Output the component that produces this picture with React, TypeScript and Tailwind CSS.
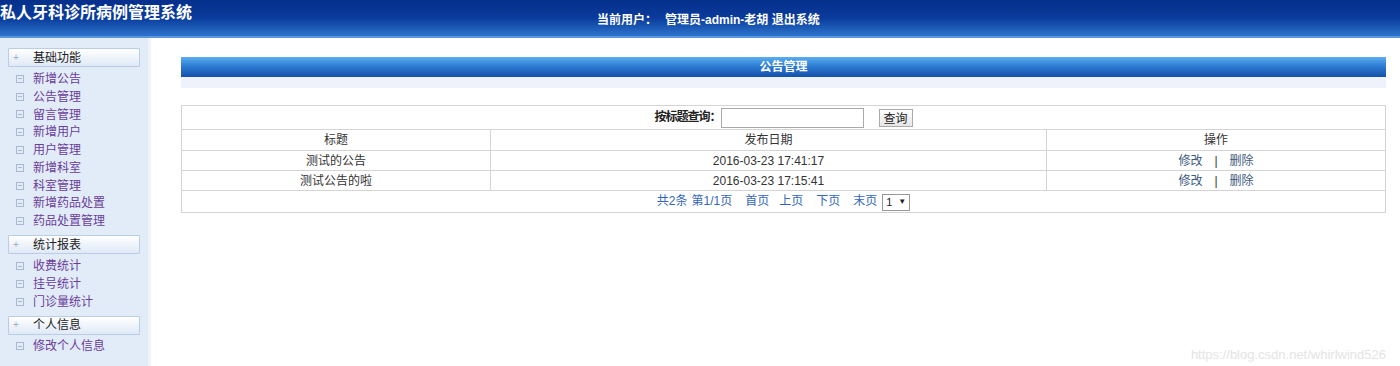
const FONT = { fontFamily: '"Liberation Sans", Arial, "Noto Sans CJK SC", sans-serif' };

type Section = { title: string; items: string[] };

const MENU: Section[] = [
  {
    title: "基础功能",
    items: ["新增公告", "公告管理", "留言管理", "新增用户", "用户管理", "新增科室", "科室管理", "新增药品处置", "药品处置管理"],
  },
  { title: "统计报表", items: ["收费统计", "挂号统计", "门诊量统计"] },
  { title: "个人信息", items: ["修改个人信息"] },
];

const ROWS = [
  { title: "测试的公告", date: "2016-03-23 17:41:17" },
  { title: "测试公告的啦", date: "2016-03-23 17:15:41" },
];

function MenuHeader({ title }: { title: string }) {
  return (
    <div className="mx-[8px] flex h-[19px] items-center rounded-[1px] border border-[#b9cde6] bg-gradient-to-b from-white to-[#dfe9f6] text-[12px] text-[#222]">
      <span className="ml-[4px] w-[20px] text-[10px] leading-none text-[#9bb0cc]">+</span>
      <span>{title}</span>
    </div>
  );
}

function MenuItem({ label }: { label: string }) {
  return (
    <div className="flex h-[17.8px] items-center pl-[16px] text-[12px] text-[#6a3d9a]">
      <span className="mr-[9px] flex h-[8px] w-[8px] items-center justify-center border border-[#a9b9d0]">
        <span className="h-px w-[4px] bg-[#a9b9d0]" />
      </span>
      <span>{label}</span>
    </div>
  );
}

export default function App() {
  return (
    <div className="flex h-[366px] w-[1400px] flex-col overflow-hidden bg-white" style={FONT}>
      {/* top banner */}
      <div className="relative flex h-[38px] shrink-0 border-b-[2px] border-[#5b95dc] bg-gradient-to-b from-[#05308c] via-[#0a3b9c] to-[#2e74cc]">
        <div className="pt-[3px] text-[16px] font-bold leading-[20px] text-white">私人牙科诊所病例管理系统</div>
        <div className="absolute left-[597px] top-[11px] text-[12px] font-bold text-white">
          当前用户：<span className="ml-[8px]">管理员-admin-老胡 退出系统</span>
        </div>
      </div>

      <div className="flex flex-1">
        {/* sidebar */}
        <div className="w-[151px] shrink-0 border-r-[3px] border-[#f0f5fc] bg-[#e2ecf8] pt-[10px]">
          {MENU.map((s, i) => (
            <div key={s.title} className={i > 0 ? "mt-[5px]" : ""}>
              <MenuHeader title={s.title} />
              <div className="pt-[3px]">
                {s.items.map((it) => (
                  <MenuItem key={it} label={it} />
                ))}
              </div>
            </div>
          ))}
        </div>

        {/* main */}
        <div className="flex-1 pl-[30px] pr-[14px] pt-[19px] text-[12px] text-[#333]">
          <div className="flex h-[20px] items-center justify-center bg-gradient-to-b from-[#5aaef0] via-[#2a78d0] to-[#1650aa] text-[12px] font-bold text-white">
            公告管理
          </div>
          <div className="h-[11px] bg-[#eef3fb]" />

          <table className="mt-[17px] w-full border-collapse border border-[#d4d4d4]">
            <tbody>
              <tr className="h-[24px]">
                <td colSpan={3} className="border border-[#d4d4d4] text-center">
                  <span className="font-bold tracking-[-1px] text-[#222]">按标题查询：</span>
                  <input className="h-[20px] w-[143px] border border-[#aaa] align-middle" />
                  <button className="ml-[15px] h-[18px] w-[34px] border border-[#aaa] bg-gradient-to-b from-white to-[#e6e6e6] align-middle text-[12px] text-[#222]">
                    查询
                  </button>
                </td>
              </tr>
              <tr className="h-[21px]">
                <td className="w-[309px] border border-[#d4d4d4] text-center">标题</td>
                <td className="w-[556px] border border-[#d4d4d4] text-center">发布日期</td>
                <td className="border border-[#d4d4d4] text-center">操作</td>
              </tr>
              {ROWS.map((r) => (
                <tr key={r.date} className="h-[20px]">
                  <td className="border border-[#d4d4d4] text-center">{r.title}</td>
                  <td className="border border-[#d4d4d4] text-center">{r.date}</td>
                  <td className="border border-[#d4d4d4] text-center text-[#3d5a80]">
                    修改<span className="mx-[12px] text-[#333]">|</span>删除
                  </td>
                </tr>
              ))}
              <tr className="h-[22px]">
                <td colSpan={3} className="border border-[#d4d4d4] text-center text-[#3366bb]">
                  <span>共2条</span>
                  <span className="ml-[4px]">第1/1页</span>
                  <span className="ml-[13px]">首页</span>
                  <span className="ml-[10px]">上页</span>
                  <span className="ml-[13px]">下页</span>
                  <span className="ml-[13px]">末页</span>
                  <span className="ml-[5px] inline-flex h-[17px] w-[28px] items-center justify-between border border-[#999] px-[3px] align-middle text-[11px] text-[#222]">
                    1<span className="text-[8px]">▼</span>
                  </span>
                </td>
              </tr>
            </tbody>
          </table>

          <div className="mt-[132px] text-right text-[13px] text-[#e4e4e4]">https://blog.csdn.net/whirlwind526</div>
        </div>
      </div>
    </div>
  );
}
